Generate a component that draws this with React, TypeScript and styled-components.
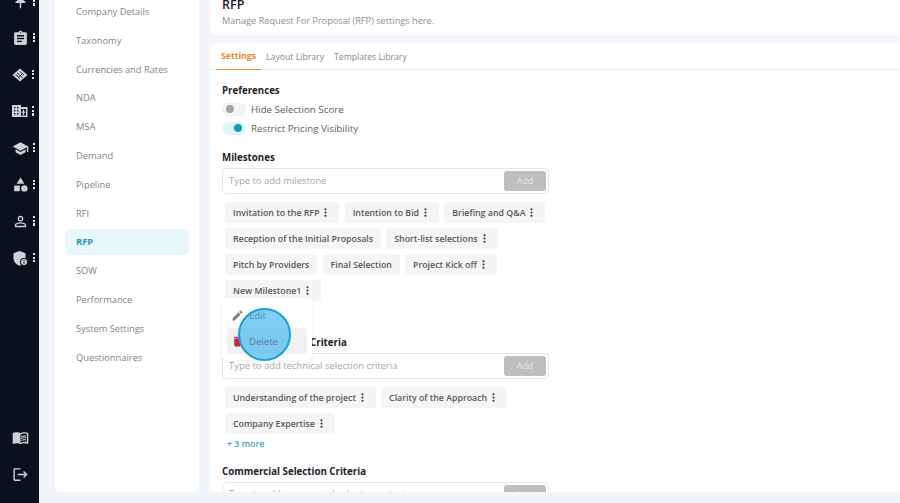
import React from "react";
import styled, { createGlobalStyle } from "styled-components";
import {
  MdAssignment,
  MdSchool,
  MdCategory,
  MdOutlinePersonOutline,
  MdMenuBook,
  MdLogout,
  MdPushPin,
  MdEdit,
  MdDelete,
  MdMoreVert,
} from "react-icons/md";

const GlobalStyle = createGlobalStyle`
  html, body {
    margin: 0;
    padding: 0;
    background: #f2f5f9;
    font-family: "Open Sans", "Noto Sans", sans-serif;
  }
  * { box-sizing: border-box; }
`;

const Page = styled.div`
  display: flex;
  width: 100%;
  height: 100vh;
  overflow: hidden;
  position: relative;
`;

const Rail = styled.aside`
  width: 39px;
  flex: none;
  background: #0a101e;
  display: flex;
  flex-direction: column;
  align-items: flex-start;
  padding-bottom: 20px;
`;

const RailTop = styled.div`
  display: flex;
  flex-direction: column;
  margin-top: -17px;
  flex: 1;
`;

const RailItem = styled.div`
  height: 36.7px;
  width: 39px;
  display: flex;
  align-items: center;
  padding-left: 12px;
  color: #cdd0d4;
  position: relative;
`;

const RailDots = styled.span`
  display: flex;
  flex-direction: column;
  gap: 1.4px;
  margin-left: 4px;
  margin-top: -1px;
  i {
    display: block;
    width: 2.2px;
    height: 2.2px;
    background: #e3e4e6;
  }
`;

const RailBottom = styled.div`
  display: flex;
  flex-direction: column;
  gap: 20px;
  padding-left: 12px;
  color: #cdd0d4;
  font-size: 17px;
  svg { display: block; }
`;

const Content = styled.div`
  flex: 1;
  min-width: 0;
  display: flex;
  gap: 11px;
  padding: 0 0 11px 16px;
`;

const NavPanel = styled.nav`
  width: 144px;
  flex: none;
  background: #fff;
  border-radius: 0 0 5px 5px;
  padding: 0 10px;
  margin-top: -1.500px;
  display: flex;
  flex-direction: column;
`;

const NavItem = styled.div<{ $active?: boolean }>`
  height: 26px;
  margin-bottom: 2.8px;
  border-radius: 5px;
  display: flex;
  align-items: center;
  padding-left: 11px;
  font-size: 9.3px;
  font-weight: ${(p) => (p.$active ? 700 : 400)};
  color: ${(p) => (p.$active ? "#1f9eae" : "#80848b")};
  background: ${(p) => (p.$active ? "#e8f7fa" : "transparent")};
`;

const Main = styled.main`
  flex: 1;
  min-width: 0;
  display: flex;
  flex-direction: column;
  gap: 8px;
`;

const HeaderCard = styled.header`
  height: 35px;
  flex: none;
  background: #fff;
  border-radius: 0 0 0 5px;
  padding-left: 12px;
  overflow: hidden;
`;

const Title = styled.h1`
  margin: -4px 0 0;
  font-size: 12.5px;
  line-height: 18px;
  font-weight: 600;
  color: #1c2026;
`;

const Subtitle = styled.p`
  margin: 0;
  font-size: 9.2px;
  line-height: 13px;
  color: #8b8f95;
`;

const SettingsCard = styled.section`
  flex: 1;
  min-height: 0;
  background: #fff;
  border-radius: 5px 0 0 5px;
  overflow: hidden;
`;

const Tabs = styled.div`
  height: 27px;
  display: flex;
  border-bottom: 1px solid #e8e9eb;
  padding-left: 6px;
`;

const Tab = styled.div<{ $active?: boolean }>`
  height: 27px;
  display: flex;
  align-items: center;
  padding: 0 5px;
  font-size: 8.7px;
  font-weight: ${(p) => (p.$active ? 700 : 400)};
  color: ${(p) => (p.$active ? "#e08a30" : "#85888e")};
  border-bottom: ${(p) => (p.$active ? "1px solid #e08a30" : "none")};
`;

const Body = styled.div`
  width: 339px;
  padding: 14px 0 0 12px;
`;

const SectionTitle = styled.h2<{ $tight?: boolean }>`
  margin: 0;
  font-size: 9.7px;
  line-height: 14px;
  font-weight: 700;
  color: #1f2329;
  word-spacing: ${(p) => (p.$tight ? "-3.5px" : "normal")};
`;

const Toggles = styled.div`
  margin-top: 1.500px;
`;

const ToggleRow = styled.div`
  height: 19px;
  display: flex;
  align-items: center;
  gap: 5px;
  font-size: 9.75px;
  color: #5d6167;
`;

const ToggleTrack = styled.span<{ $on?: boolean }>`
  width: 24px;
  height: 13px;
  border-radius: 7px;
  display: flex;
  align-items: center;
  justify-content: ${(p) => (p.$on ? "flex-end" : "flex-start")};
  padding: 0 3px;
  background: ${(p) => (p.$on ? "#dff6f9" : "#f3f4f6")};
  border: 1px solid ${(p) => (p.$on ? "#dff6f9" : "#eceef0")};
`;

const ToggleKnob = styled.span<{ $on?: boolean }>`
  width: 8px;
  height: 8px;
  border-radius: 50%;
  background: ${(p) => (p.$on ? "#0fa3b1" : "#a3a5a9")};
`;

const Block = styled.div<{ $top: number }>`
  margin-top: ${(p) => p.$top}px;
`;

const InputBox = styled.div`
  margin-top: 3px;
  height: 26px;
  width: 327px;
  border: 1px solid #e5e6e8;
  border-radius: 4px;
  display: flex;
  align-items: center;
  justify-content: space-between;
  padding: 0 2px 0 6px;
  font-size: 9.45px;
  color: #a5a8ad;
`;

const Placeholder = styled.span`
  margin-top: -2px;
`;

const AddButton = styled.span`
  width: 42px;
  height: 20px;
  border-radius: 3px;
  background: #bdbec0;
  color: #e9e9ea;
  font-size: 8.8px;
  font-weight: 500;
  display: flex;
  align-items: center;
  justify-content: center;
`;

const Chips = styled.div`
  margin-top: 8px;
  width: 327px;
  padding-left: 3px;
  display: flex;
  flex-wrap: wrap;
  gap: 5px 5.2px;
`;

const Chip = styled.span`
  height: 21px;
  border-radius: 3px;
  background: #f5f5f6;
  display: inline-flex;
  align-items: center;
  padding: 0 8px;
  font-size: 8.8px;
  font-weight: 600;
  color: #54585e;
  white-space: nowrap;
  svg {
    margin: 0 -1px 0 0;
    font-size: 13px;
    color: #3c4046;
  }
`;

const MoreLink = styled.div`
  margin: 3.500px 0 0 5px;
  font-size: 8.8px;
  line-height: 13px;
  font-weight: 600;
  color: #3aa8b4;
`;

const Menu = styled.div`
  position: absolute;
  left: 222px;
  top: 298px;
  width: 90px;
  height: 62px;
  background: #fff;
  border-radius: 4px;
  padding: 4px 5px;
  box-shadow: 0 1px 5px rgba(30, 40, 60, 0.08);
  display: flex;
  flex-direction: column;
  z-index: 2;
`;

const MenuItem = styled.div<{ $danger?: boolean }>`
  height: 26px;
  display: flex;
  align-items: center;
  gap: 5px;
  padding-left: 4px;
  border-radius: 3px;
  font-size: 9.6px;
  color: ${(p) => (p.$danger ? "#7a0a30" : "#4a4e54")};
  background: ${(p) => (p.$danger ? "#f1f1f2" : "transparent")};
  svg {
    font-size: 13px;
    flex: none;
    color: ${(p) => (p.$danger ? "#c9213f" : "#7b7e83")};
  }
`;

const Spot = styled.div`
  position: absolute;
  left: 238px;
  top: 308px;
  width: 53px;
  height: 53px;
  border-radius: 50%;
  background: rgba(60, 180, 235, 0.65);
  border: 2px solid #1a9ed9;
  z-index: 3;
`;

const HandshakeIcon = () => (
  <svg width="16" height="14" viewBox="0 0 16 14">
    <path fill="currentColor" d="M8 0.500 15.500 7 8 13.500 0.500 7z" />
    <path
      fill="none"
      stroke="#0a101e"
      strokeWidth="0.800"
      d="M5 4.800 10.500 9.600M3.500 6.500 8 10.500M8 3.500 12 7M6.500 9.500 10 6"
    />
  </svg>
);

const BuildingIcon = () => (
  <svg width="16" height="14" viewBox="0 0 16 14" fill="currentColor">
    <path d="M0 1h9v2h6.500v10H0z" />
    <g fill="#0a101e">
      <rect x="2" y="3" width="1.400" height="1.400" />
      <rect x="5" y="3" width="1.400" height="1.400" />
      <rect x="2" y="6" width="1.400" height="1.400" />
      <rect x="5" y="6" width="1.400" height="1.400" />
      <rect x="2" y="9" width="1.400" height="1.400" />
      <rect x="5" y="9" width="1.400" height="1.400" />
      <rect x="9" y="5" width="5" height="6.500" />
    </g>
    <rect x="10.800" y="5.500" width="1.300" height="5.500" />
    <rect x="9.500" y="7.600" width="4" height="1.200" />
  </svg>
);

const ShieldBadgeIcon = () => (
  <svg width="17" height="17" viewBox="0 0 17 17">
    <path
      fill="currentColor"
      d="M7.500 1 13.500 3.300v4.700c0 3.800-2.600 6.700-6 7.700-3.400-1-6-3.900-6-7.700V3.300z"
    />
    <circle cx="12" cy="12" r="4" fill="#0a101e" />
    <circle cx="12" cy="12" r="3" fill="currentColor" />
    <rect x="11.500" y="11.500" width="1" height="2.300" fill="#0a101e" />
    <rect x="11.500" y="10" width="1" height="1" fill="#0a101e" />
  </svg>
);

const navItems = [
  "Company Details",
  "Taxonomy",
  "Currencies and Rates",
  "NDA",
  "MSA",
  "Demand",
  "Pipeline",
  "RFI",
  "RFP",
  "SOW",
  "Performance",
  "System Settings",
  "Questionnaires",
];

const railIcons = [
  <MdPushPin key="pin" size={17} />,
  <MdAssignment key="clip" size={17} />,
  <HandshakeIcon key="deal" />,
  <BuildingIcon key="org" />,
  <MdSchool key="school" size={17} />,
  <MdCategory key="cat" size={17} />,
  <MdOutlinePersonOutline key="user" size={17} />,
  <ShieldBadgeIcon key="shield" />,
];

const milestones = [
  { label: "Invitation to the RFP", more: true },
  { label: "Intention to Bid", more: true },
  { label: "Briefing and Q&A", more: true },
  { label: "Reception of the Initial Proposals" },
  { label: "Short-list selections", more: true },
  { label: "Pitch by Providers" },
  { label: "Final Selection" },
  { label: "Project Kick off", more: true },
  { label: "New Milestone1", more: true },
];

const technical = [
  { label: "Understanding of the project", more: true },
  { label: "Clarity of the Approach", more: true },
  { label: "Company Expertise", more: true },
];

type ChipData = { label: string; more?: boolean };

const ChipList = ({ items }: { items: ChipData[] }) => (
  <Chips>
    {items.map((item) => (
      <Chip key={item.label}>
        {item.label}
        {item.more && <MdMoreVert />}
      </Chip>
    ))}
  </Chips>
);

export default function App() {
  return (
    <Page>
      <GlobalStyle />
      <Rail>
        <RailTop>
          {railIcons.map((icon, i) => (
            <RailItem key={i}>
              {icon}
              <RailDots>
                <i />
                <i />
                <i />
              </RailDots>
            </RailItem>
          ))}
        </RailTop>
        <RailBottom>
          <MdMenuBook />
          <MdLogout />
        </RailBottom>
      </Rail>
      <Content>
        <NavPanel>
          {navItems.map((item) => (
            <NavItem key={item} $active={item === "RFP"}>
              {item}
            </NavItem>
          ))}
        </NavPanel>
        <Main>
          <HeaderCard>
            <Title>RFP</Title>
            <Subtitle>Manage Request For Proposal (RFP) settings here.</Subtitle>
          </HeaderCard>
          <SettingsCard>
            <Tabs>
              <Tab $active>Settings</Tab>
              <Tab>Layout Library</Tab>
              <Tab>Templates Library</Tab>
            </Tabs>
            <Body>
              <SectionTitle>Preferences</SectionTitle>
              <Toggles>
                <ToggleRow>
                  <ToggleTrack>
                    <ToggleKnob />
                  </ToggleTrack>
                  Hide Selection Score
                </ToggleRow>
                <ToggleRow>
                  <ToggleTrack $on>
                    <ToggleKnob $on />
                  </ToggleTrack>
                  Restrict Pricing Visibility
                </ToggleRow>
              </Toggles>
              <Block $top={13.5}>
                <SectionTitle>Milestones</SectionTitle>
                <InputBox>
                  <Placeholder>Type to add milestone</Placeholder>
                  <AddButton>Add</AddButton>
                </InputBox>
                <ChipList items={milestones} />
              </Block>
              <Block $top={35.4}>
                <SectionTitle $tight>Technical Selection Criteria</SectionTitle>
                <InputBox>
                  <Placeholder>Type to add technical selection criteria</Placeholder>
                  <AddButton>Add</AddButton>
                </InputBox>
                <ChipList items={technical} />
                <MoreLink>+ 3 more</MoreLink>
              </Block>
              <Block $top={14}>
                <SectionTitle>Commercial Selection Criteria</SectionTitle>
                <InputBox>
                  <Placeholder>Type to add commercial selection criteria</Placeholder>
                  <AddButton>Add</AddButton>
                </InputBox>
              </Block>
            </Body>
          </SettingsCard>
        </Main>
      </Content>
      <Menu>
        <MenuItem>
          <MdEdit />
          Edit
        </MenuItem>
        <MenuItem $danger>
          <MdDelete />
          Delete
        </MenuItem>
      </Menu>
      <Spot />
    </Page>
  );
}
